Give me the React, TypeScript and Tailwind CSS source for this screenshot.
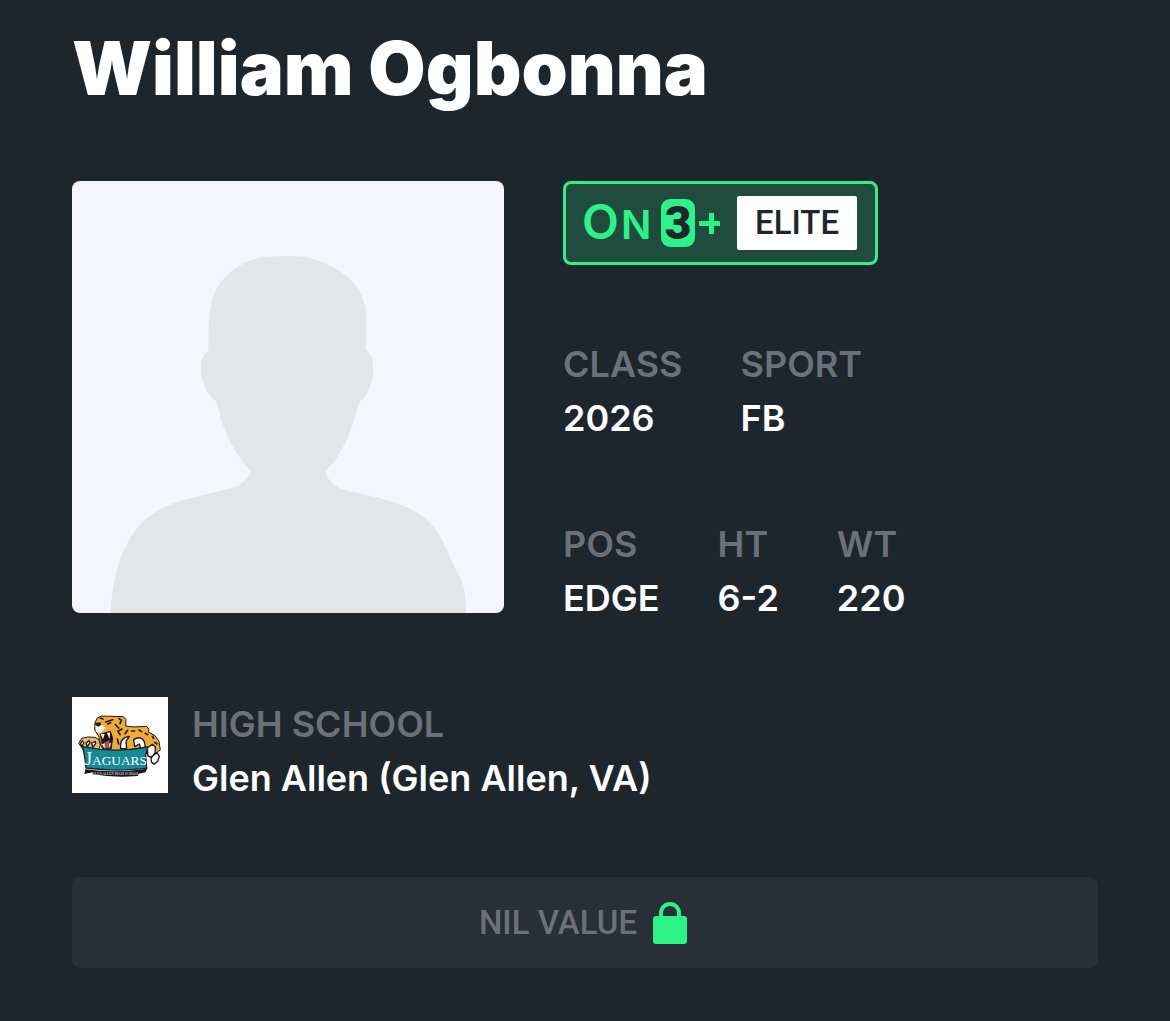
import React from "react";

function Stat({ label, value }: { label: string; value: string }) {
  return (
    <div className="text-4xl leading-[54px] font-semibold">
      <dt className="text-[#6b717a]">{label}</dt>
      <dd className="text-white">{value}</dd>
    </div>
  );
}

function Portrait() {
  return (
    <svg viewBox="18 18 1296 1296" className="size-[432px] shrink-0 rounded-lg bg-[#f5f6fb]" role="img" aria-label="Player photo placeholder">
      <path
        fill="#e2e6e9"
        d="M133 1314 C140 1225 158 1145 188 1098 C220 1038 265 1003 345 977 L500 938 C525 931 545 910 556 890 C510 839 473 780 452 680 C423 660 405 620 405 575 C405 550 414 535 427 529 C428 450 427 396 447 350 C470 302 515 268 570 250 Q610 243 665 243 C735 243 765 256 820 288 C875 320 901 373 901 430 L900 525 C914 535 922 553 922 577 C922 622 907 662 878 683 C861 760 829 843 776 890 Q790 924 820 940 C910 966 990 971 1065 1020 C1130 1070 1140 1125 1171 1185 C1190 1220 1200 1240 1200 1314Z"
      />
    </svg>
  );
}

function On3Logo() {
  return (
    <svg viewBox="0 0 136 50" className="h-[50px] w-[136px] overflow-visible" role="img" aria-label="On3 plus">
      <g fill="#2cf288" fontFamily="Inter, sans-serif" fontWeight="600">
        <text x="-2" y="41" fontSize="48">O</text>
        <text x="37" y="41" fontSize="40">N</text>
        <rect x="77" y="1" width="34" height="48" rx="9" />
        <path d="M125 15h5v8h6v5h-6v8h-5v-8h-10v-5h10z" />
      </g>
      <text x="94" y="41" textAnchor="middle" fontSize="46" fontWeight="900" fontFamily="Roboto, sans-serif" fill="#1d252d">3</text>
    </svg>
  );
}

function JaguarsLogo() {
  return (
    <svg viewBox="18 21 288 288" className="size-24 shrink-0 bg-white" role="img" aria-label="Glen Allen Jaguars">
      <g stroke="#1b1917" strokeWidth="3" strokeLinejoin="round">
        <path fill="#f0aa38" d="M87 98 L94 84 L106 78 L172 80 L180 88 L179 108 L203 111 L241 109 L249 117 L247 126 L267 137 L279 154 L283 180 L262 194 L238 190 L232 182 L112 181 L103 163 L98 139 L86 119Z" />
        <path fill="#1b1917" d="M103 133 L133 124 L140 145 L135 178 L112 179Z" />
        <path fill="#e6b978" d="M38 160 L47 145 L65 141 L87 142 L99 149 L103 166 L98 180 L53 181Z" />
      </g>
      <path fill="#c7464b" d="M114 158 L130 150 L130 174 L117 175Z" />
      <path fill="#fff" d="M104 132l12 0-5 16z M123 129l9-2-1 20z M108 163l8-3 0 17z M129 162l6-5-4 20z M88 106l18-2 12 9-13 16-14-3z" />
      <path fill="#1b1917" d="M87 99l16-2 3 7-9 6-9-5z" />
      <path fill="none" stroke="#1b1917" strokeWidth="5" strokeLinecap="round" d="M119 96 L140 89 M125 102l9-4 M103 84l8 3 M159 86l7 5-4 10 M148 104l10 10 M168 117l-12 7 6 10 M185 121l-8 10 M197 123l9 0 M219 120l8 5 M238 130l7 4 M259 139l4 6 M266 157l7 5 M260 178l9-4 M154 147l4 15" />
      <g fill="#fff" stroke="#1b1917" strokeWidth="4" strokeLinejoin="round">
        <path d="M164 176 C161 152 172 141 190 139 L180 154 L182 176Z" />
        <path d="M203 149 C226 134 240 151 237 180 L228 188 L220 162 L206 170Z" />
        <path d="M244 174l15-11 9 8-1 18-10 13-11-4z M255 201l18-13 7 11-5 15-11 9-8-7z" />
        <path d="M43 161l6-8 4 5-5 12z M60 159l10-7 2 6-8 12z M77 159l11-5 1 7-9 11z" />
      </g>
      <path fill="#158b98" stroke="#17242b" strokeWidth="4" d="M50 170 Q145 190 245 171 L239 197 L242 235 Q149 246 60 234 L57 206Z" />
      <path fill="#17171a" d="M58 238 Q148 250 244 236 L238 247 L218 251 L216 258 Q145 264 80 253 L80 247 L55 252Z" />
      <text x="150" y="224" textAnchor="middle" fill="#fff" fontFamily="Liberation Serif, serif" fontSize="40"><tspan fontSize="54">J</tspan>AGUARS</text>
      <text x="149" y="254" textAnchor="middle" fill="#ccc" fontFamily="Liberation Serif, serif" fontSize="10" fontWeight="700">GLEN ALLEN HIGH SCHOOL</text>
    </svg>
  );
}

export default function App() {
  return (
    <main className="flex min-h-screen flex-col gap-[72px] bg-[#1d252d] px-[72px] pt-[27px] pb-[53px] font-['Inter',sans-serif]">
      <h1 className="text-[74px] leading-[82px] font-black text-white">William Ogbonna</h1>
      <section className="flex items-start gap-[59px]">
        <Portrait />
        <div className="flex flex-col items-start gap-[72px]">
          <a href="#elite" className="flex h-[84px] items-center gap-[17px] rounded-lg border-3 border-[#35ed8d] bg-[#204c3e] px-[18px]">
            <On3Logo />
            <span className="rounded-xs bg-white px-[18px] font-['Roboto',sans-serif] text-[33px] leading-[54px] font-medium text-[#1d252d]">ELITE</span>
          </a>
          <dl className="flex gap-[58px]">
            <Stat label="CLASS" value="2026" />
            <Stat label="SPORT" value="FB" />
          </dl>
          <dl className="flex gap-[58px]">
            <Stat label="POS" value="EDGE" />
            <Stat label="HT" value="6-2" />
            <Stat label="WT" value="220" />
          </dl>
        </div>
      </section>
      <section className="flex items-start gap-6">
        <JaguarsLogo />
        <dl>
          <Stat label="HIGH SCHOOL" value="Glen Allen (Glen Allen, VA)" />
        </dl>
      </section>
      <button type="button" className="flex h-[91px] items-center justify-center gap-4 rounded-lg bg-[#282f37] pr-1 font-['Roboto',sans-serif] text-[33px] font-medium text-[#6b717a]">
        NIL VALUE
        <svg viewBox="0 0 34 42" className="h-[42px] w-[34px]" aria-hidden="true">
          <rect y="14" width="34" height="28" rx="3" fill="#2cf288" />
          <path d="M8 16v-5a9 9 0 0 1 18 0v5" fill="none" stroke="#2cf288" strokeWidth="4" />
        </svg>
      </button>
    </main>
  );
}
